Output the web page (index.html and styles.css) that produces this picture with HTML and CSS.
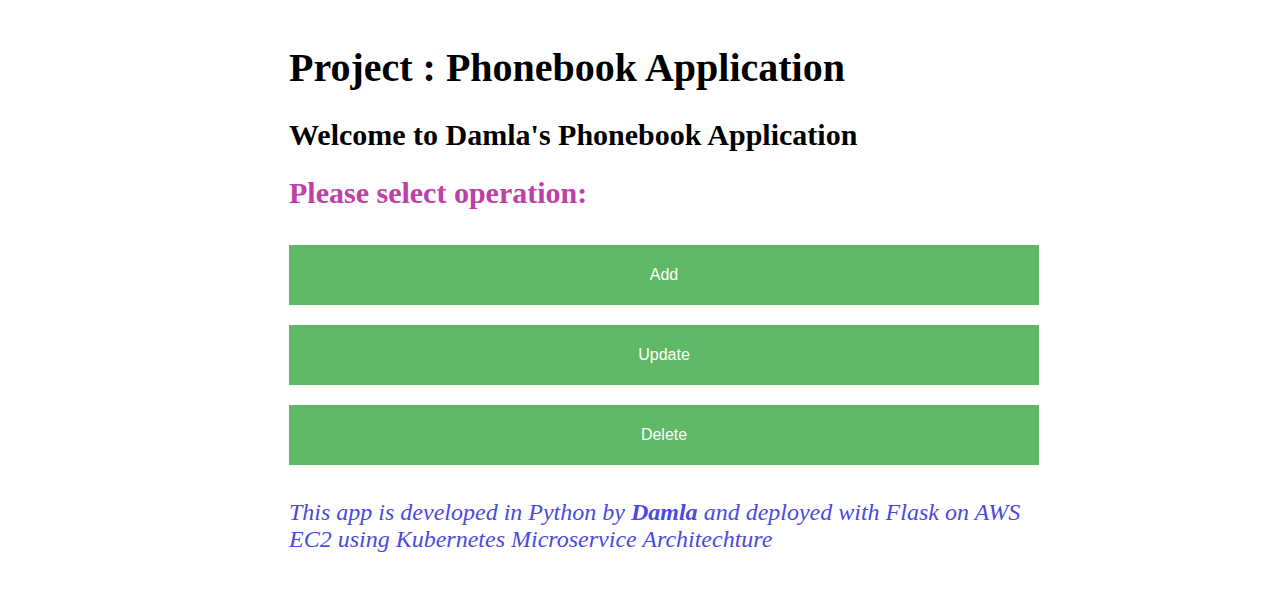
FILE: index.html
```html
<!DOCTYPE html>
<html>
<head>
<meta charset="utf-8">
<link rel="stylesheet" href="styles.css">
</head>
<body>
<div class="container">
  <h1 class="title">Project : Phonebook Application</h1>
  <h2 class="welcome">Welcome to Damla's Phonebook Application</h2>
  <h3 class="prompt">Please select operation:</h3>
  <div class="buttons">
    <button class="btn">Add</button>
    <button class="btn">Update</button>
    <button class="btn">Delete</button>
  </div>
  <p class="footer">This app is developed in Python by <b>Damla</b> and deployed with Flask on AWS EC2 using Kubernetes Microservice Architechture</p>
</div>
</body>
</html>
```
FILE: styles.css
```css
html, body {
  margin: 0;
  padding: 0;
  background: #ffffff;
}
body {
  font-family: "Liberation Serif", "Times New Roman", serif;
  color: #000;
}
.container {
  width: 750px;
  margin-left: 289px;
  padding-top: 44px;
}
.title {
  font-size: 40px;
  font-weight: bold;
  margin: 0;
  line-height: 48px;
}
.welcome {
  font-size: 30px;
  font-weight: bold;
  margin: 25px 0 0;
  line-height: 36px;
}
.prompt {
  font-size: 30px;
  font-weight: bold;
  color: #c040a8;
  margin: 22px 0 0;
  line-height: 36px;
}
.buttons {
  display: flex;
  flex-direction: column;
  gap: 20px;
  margin-top: 34px;
}
.btn {
  height: 60px;
  width: 100%;
  border: none;
  background: #5fb865;
  color: #ffffff;
  font-family: "Liberation Sans", Arial, sans-serif;
  font-size: 16px;
  padding: 0;
}
.footer {
  font-style: italic;
  font-size: 24px;
  line-height: 27px;
  color: #4a4ae0;
  margin: 34px 0 0;
}
.footer b {
  font-weight: bold;
}
```
